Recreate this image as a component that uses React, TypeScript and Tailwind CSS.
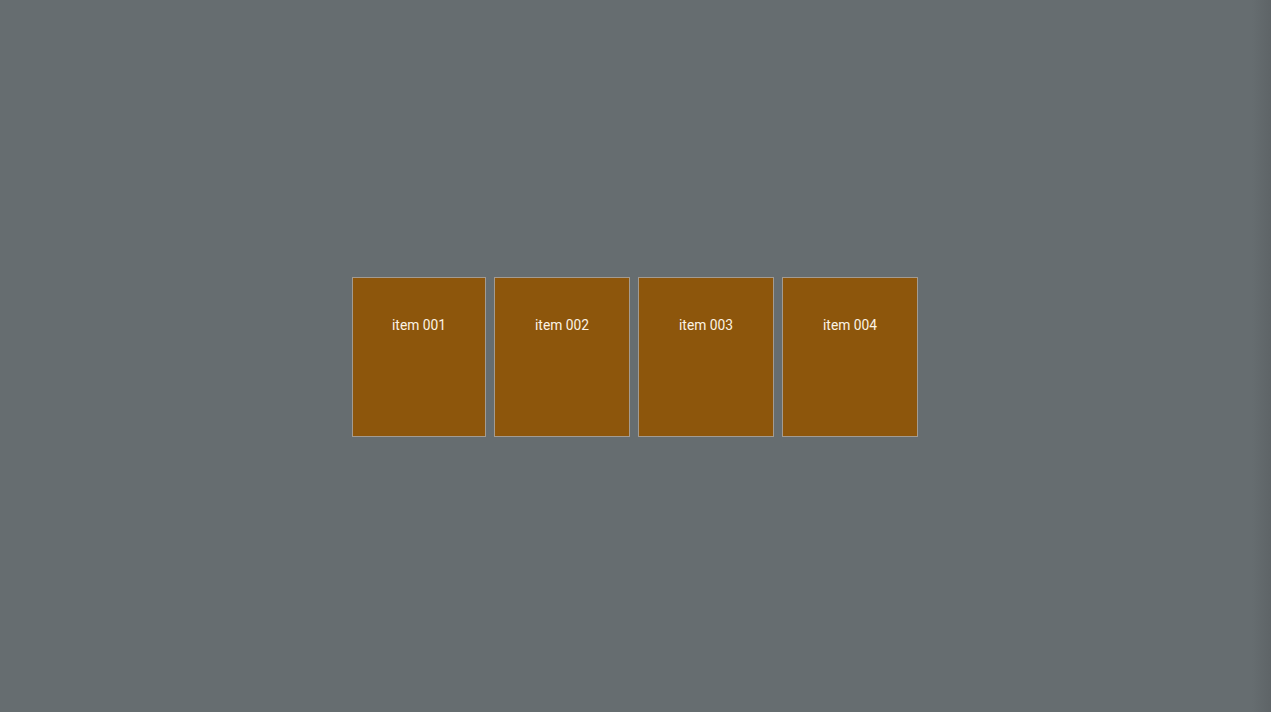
import React from 'react'

const items = [
  { label: 'item 001', w: 'w-[134px]' },
  { label: 'item 002', w: 'w-[136px]' },
  { label: 'item 003', w: 'w-[136px]' },
  { label: 'item 004', w: 'w-[136px]' },
]

const App = () => {
  return (
    <main className="h-[712px] w-full flex items-center justify-center bg-[linear-gradient(to_right,#666d70_0%,#666d70_98.5%,#5e6467_100%)] font-['Roboto',sans-serif]">
      <div className="flex gap-2 ml-[-1px] mt-[2px]">
        {items.map((item) => (
          <div
            key={item.label}
            className={`${item.w} h-[160px] bg-[#8d560c] border border-[#a39b91] flex justify-center pt-[39px]`}
          >
            <span className="text-[13.8px] leading-4 text-[#fbf3e4]">{item.label}</span>
          </div>
        ))}
      </div>
    </main>
  )
}

export default App
